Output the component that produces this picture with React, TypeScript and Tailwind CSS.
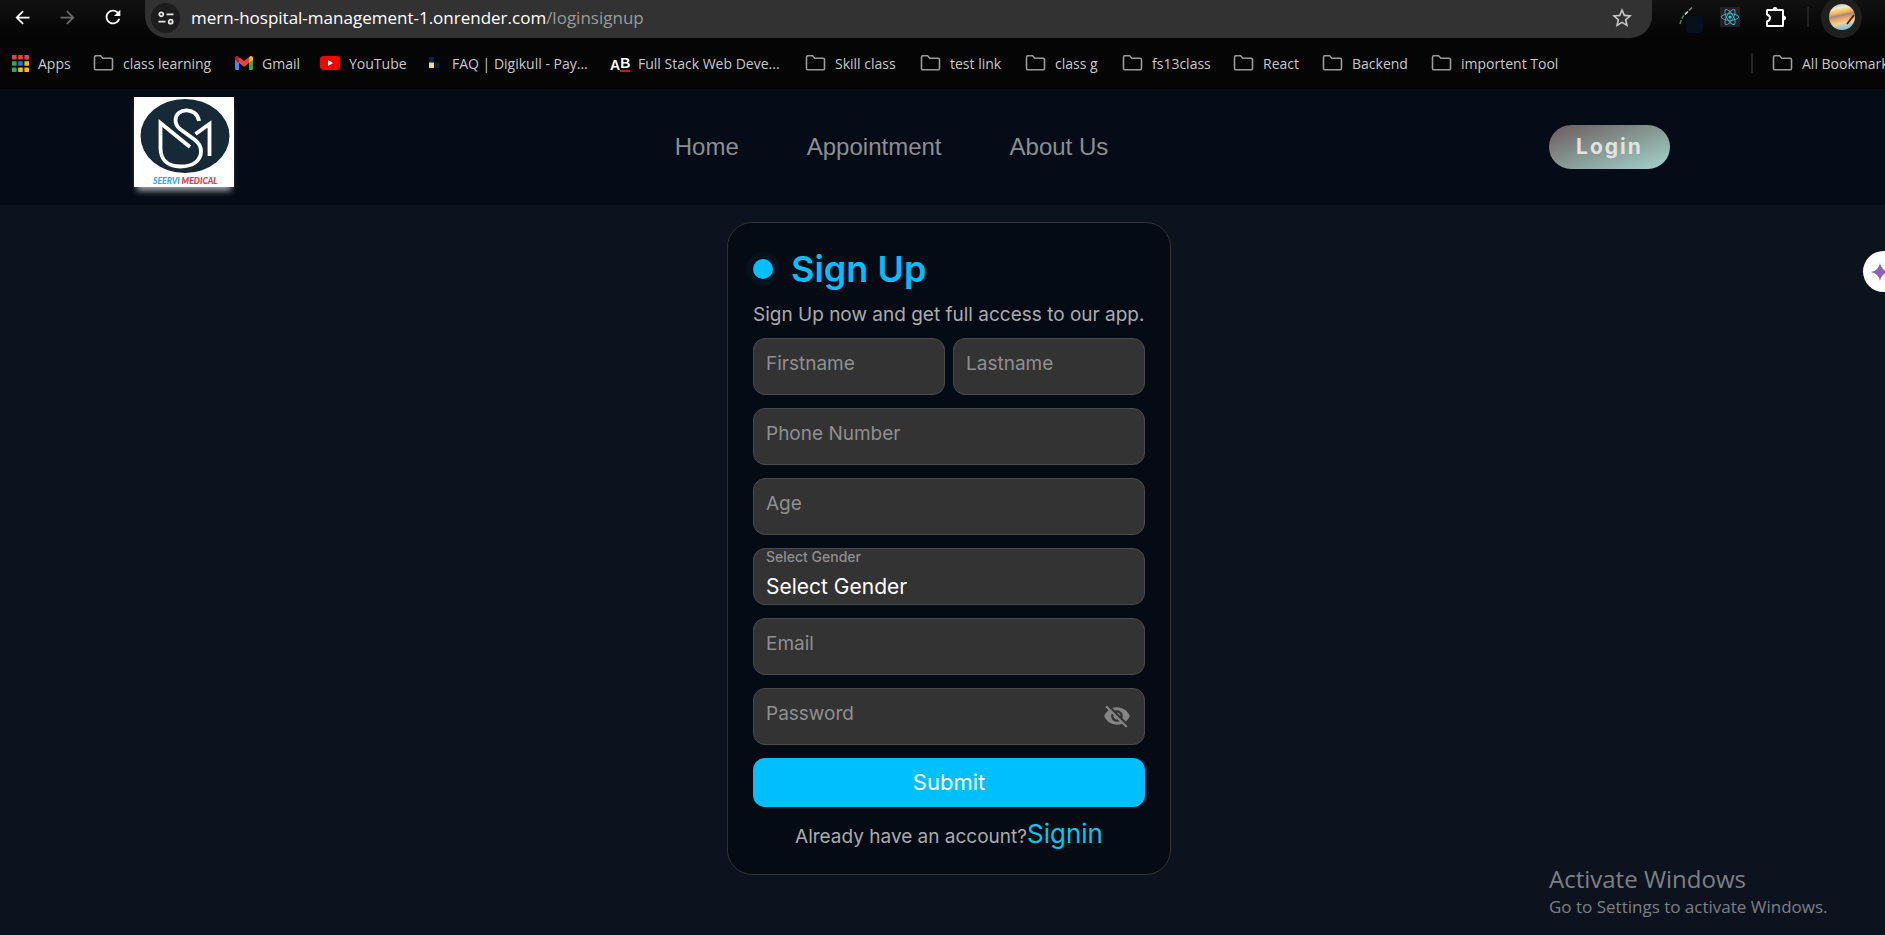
import React, { useState } from "react";
import { FaReact } from "react-icons/fa";
import { MdArrowBack, MdArrowForward, MdRefresh, MdStarBorder, MdVisibilityOff } from "react-icons/md";

const FolderIcon = () => (
  <svg viewBox="0 0 21 18" className="h-[18px] w-[21px] shrink-0" fill="none" stroke="#9a9a9a" strokeWidth="1.6">
    <path d="M1.5 3.2Q1.5 1.8 2.9 1.8H7.6L9.8 4.2H18.1Q19.5 4.2 19.5 5.6V14.4Q19.5 15.8 18.1 15.8H2.9Q1.5 15.8 1.5 14.4Z" />
  </svg>
);

const AppsIcon = () => (
  <svg viewBox="0 0 17 17" className="h-[17px] w-[17px] shrink-0">
    {["#ea4335", "#ea4335", "#ea4335", "#34a853", "#1a73e8", "#fbbc04", "#34a853", "#fbbc04", "#fbbc04"].map((c, i) => (
      <rect key={i} x={(i % 3) * 6.2} y={Math.floor(i / 3) * 6.2} width="4.6" height="4.6" rx="0.4" fill={c} />
    ))}
  </svg>
);

const GmailIcon = () => (
  <svg viewBox="0 0 18 14" className="h-[14px] w-[18px] shrink-0">
    <path d="M0 2V12.7Q0 14 1.3 14H4V5Z" fill="#4285f4" />
    <path d="M18 2V12.7Q18 14 16.7 14H14V5Z" fill="#34a853" />
    <path d="M14 1.2V7L18 4V2Q18 0 16 0Q15.2 0 14 1.2Z" fill="#fbbc04" />
    <path d="M0 2V4L4 7V1.2Q2.8 0 2 0Q0 0 0 2Z" fill="#c5221f" />
    <path d="M4 1.2V7L9 10.7L14 7V1.2L9 5Z" fill="#ea4335" />
  </svg>
);

const YouTubeIcon = () => (
  <svg viewBox="0 0 20 14" className="h-[14px] w-5 shrink-0">
    <rect width="20" height="14" rx="3.5" fill="#f00" />
    <path d="M8 4V10L13 7Z" fill="#fff" />
  </svg>
);

const DigikullIcon = () => (
  <svg viewBox="0 0 14 12" className="h-3 w-[14px] shrink-0">
    <rect width="5" height="5" fill="#0d2145" />
    <rect y="5.5" width="5" height="5.5" fill="#f7dc6a" />
    <rect x="5.5" y="5.5" width="5" height="5.5" fill="#0b1c3c" />
  </svg>
);

const AlmaIcon = () => (
  <span className="flex h-[18px] w-[19px] shrink-0 items-end font-['Liberation_Sans',sans-serif] text-[14px] font-bold text-white">
    <span className="leading-[14px]">A</span>
    <span className="border-b-2 border-[#d0142c] leading-[14px]">B</span>
  </span>
);

type Bookmark = { label: string; icon: React.ReactNode; width: string };

const bookmarks: Bookmark[] = [
  { label: "Apps", icon: <AppsIcon />, width: "w-[81px]" },
  { label: "class learning", icon: <FolderIcon />, width: "w-[142px]" },
  { label: "Gmail", icon: <GmailIcon />, width: "w-[85px]" },
  { label: "YouTube", icon: <YouTubeIcon />, width: "w-[109px]" },
  { label: "FAQ | Digikull - Pay...", icon: <DigikullIcon />, width: "w-[181px]" },
  { label: "Full Stack Web Deve...", icon: <AlmaIcon />, width: "w-[195px]" },
  { label: "Skill class", icon: <FolderIcon />, width: "w-[115px]" },
  { label: "test link", icon: <FolderIcon />, width: "w-[105px]" },
  { label: "class g", icon: <FolderIcon />, width: "w-[97px]" },
  { label: "fs13class", icon: <FolderIcon />, width: "w-[111px]" },
  { label: "React", icon: <FolderIcon />, width: "w-[89px]" },
  { label: "Backend", icon: <FolderIcon />, width: "w-[109px]" },
  { label: "importent Tool", icon: <FolderIcon />, width: "w-[140px]" },
];

const BrowserBar = () => (
  <div className="h-[89px] overflow-hidden bg-[#050505] font-['Open_Sans','Noto_Sans',sans-serif]">
    <div className="flex h-[38px] items-start bg-linear-to-b from-[#111111] to-[#050505]">
      <div className="flex h-[34px] w-[145px] shrink-0 items-center gap-6 pl-[12px]">
        <button aria-label="Back"><MdArrowBack className="size-[21px] text-white" /></button>
        <button aria-label="Forward"><MdArrowForward className="size-[21px] text-[#6b6b6b]" /></button>
        <button aria-label="Reload"><MdRefresh className="size-[22px] text-white" /></button>
      </div>
      <div className="flex h-[38px] flex-1 items-center rounded-b-[22px] bg-[#323232] pr-[18px] pb-[3px] pl-[6px]">
        <span className="flex h-[30px] w-[29px] items-center justify-center rounded-full bg-[#1d1d1d]">
          <svg viewBox="0 0 16 14" className="h-[14px] w-4" fill="none" stroke="#e6e6e6" strokeWidth="1.8">
            <circle cx="3.3" cy="3.3" r="2" />
            <path d="M8.5 3.3H15.5M0.5 10.7H7.5" />
            <circle cx="12.7" cy="10.7" r="2" />
          </svg>
        </span>
        <p className="ml-[11px] flex-1 text-[17px] leading-6 text-white">
          mern-hospital-management-1.onrender.com<span className="text-[#9b9b9b]">/loginsignup</span>
        </p>
        <button aria-label="Bookmark this page"><MdStarBorder className="size-6 text-[#c7c7c7]" /></button>
      </div>
      <div className="flex h-[34px] w-[233px] shrink-0 items-center pl-[26px]">
        <svg viewBox="0 0 26 28" className="mt-1 h-7 w-[26px]">
          <rect x="8" y="11" width="17" height="17" rx="4" fill="#06101f" />
          <path d="M2 19Q4 11 9 7" stroke="#3f8f5a" strokeWidth="1.5" fill="none" strokeDasharray="4 1.5" />
          <path d="M7 9.5L10 6.5" stroke="#d8d8d8" strokeWidth="1.5" />
          <path d="M11 5.5L14 2.5" stroke="#8a8a8a" strokeWidth="1.5" />
        </svg>
        <span className="ml-[16px] flex size-5 items-center justify-center bg-[#222222]">
          <FaReact className="size-[18px] text-[#53c1de]" />
        </span>
        <svg viewBox="0 0 22 22" className="ml-[25px] size-[22px]" fill="none" stroke="#fff" strokeWidth="2" strokeLinejoin="round">
          <path d="M2.5 4H17.5Q18 4 18 4.5V19.5Q18 20 17.5 20H2.5Q2 20 2 19.5V15.5Q5 14.5 5 12Q5 9.5 2 8.500V4.5Q2 4 2.5 4Z" />
          <path d="M7.5 4Q7.5 1 10 1Q12.5 1 12.5 4ZM18 9.500Q21 9.500 21 12Q21 14.500 18 14.500Z" fill="#fff" stroke="none" />
        </svg>
        <span className="ml-5 h-5 w-[2px] bg-[#222222]" />
        <span className="ml-[12px] flex size-[41px] shrink-0 items-center justify-center rounded-full bg-[#1f1f1f]">
          <svg viewBox="0 0 26 26" className="size-[26px]">
            <defs>
              <clipPath id="avatar"><circle cx="13" cy="13" r="13" /></clipPath>
              <linearGradient id="sunset" x1="0" y1="0" x2="0.2" y2="1">
                <stop offset="0" stopColor="#7cc0d8" />
                <stop offset="0.22" stopColor="#f8ebc0" />
                <stop offset="0.42" stopColor="#f5b04a" />
                <stop offset="0.5" stopColor="#a08a90" />
                <stop offset="0.65" stopColor="#f2a95c" />
                <stop offset="0.8" stopColor="#f0cfa0" />
                <stop offset="1" stopColor="#8cc6d6" />
              </linearGradient>
            </defs>
            <g clipPath="url(#avatar)">
              <rect width="26" height="26" fill="url(#sunset)" />
              <path d="M25 11L18 20" stroke="#3a2020" strokeWidth="1.8" />
            </g>
          </svg>
        </span>
      </div>
    </div>
    <div className="flex h-[51px] items-center overflow-hidden pb-[1px] pl-[12px] text-[14px] whitespace-nowrap text-[#c8c8c8]">
      {bookmarks.map((b) => (
        <a key={b.label} href="#" className={`flex shrink-0 items-center gap-[9px] ${b.width}`}>
          {b.icon}
          {b.label}
        </a>
      ))}
      <div className="ml-auto flex w-[134px] shrink-0 items-center">
        <span className="mr-[19px] h-5 w-[2px] shrink-0 bg-[#222222]" />
        <a href="#" className="flex items-center gap-[9px]"><FolderIcon />All Bookmarks</a>
      </div>
    </div>
  </div>
);

const Logo = () => (
  <svg viewBox="0 0 100 90" className="mb-[10px] h-[90px] w-[100px] bg-white shadow-[0_7px_6px_-3px_rgba(255,255,255,0.6)]" role="img" aria-label="Seervi Medical">
    <ellipse cx="51" cy="39" rx="44.5" ry="37" fill="#152a36" />
    <g fill="none" stroke="#fff" strokeWidth="3.8">
      <path d="M65 24C63 10 42 10 41.500 23C41.500 28 43.500 30 46 32L61 43C66 47 67 50 67 54C67 63 60 69.500 46.500 69.500C33 69.500 26.500 62 26.500 51V26L56 50" />
      <path d="M61.500 37L75.500 27V59" />
    </g>
    <text x="19" y="87" fontSize="8.600" fontWeight="900" fontStyle="italic" fontFamily="Lato, sans-serif" fill="#35a3f5">
      SEERVI <tspan fill="#fb3048">MEDICAL</tspan>
    </text>
  </svg>
);

const NavBar = () => (
  <header className="flex h-[116px] items-center justify-between bg-[#050c17] pr-[215px] pl-[134px]">
    <Logo />
    <nav className="flex gap-[68px] font-['Liberation_Sans',sans-serif] text-[24px] text-[#8b8e93]">
      <a href="#">Home</a>
      <a href="#">Appointment</a>
      <a href="#">About Us</a>
    </nav>
    <button className="h-11 w-[121px] rounded-full bg-linear-to-br from-[#695b5e] via-[#869892] to-[#a4d5d0] text-[21px] font-bold tracking-[2px] text-[#e2e2e2]">
      Login
    </button>
  </header>
);

const fieldBox = "h-[57px] w-full rounded-xl border border-[#4a4a4a] bg-[#333333] px-3 outline-none";

const Field = ({ id, label, type = "text" }: { id: string; label: string; type?: string }) => (
  <div className="relative w-full">
    <input id={id} type={type} placeholder=" " className={`${fieldBox} peer block pt-5 text-[19px] text-white`} />
    <label
      htmlFor={id}
      className="pointer-events-none absolute top-[2px] left-[13px] text-[14px] leading-4 text-[#8f8f8f] peer-placeholder-shown:top-[14px] peer-placeholder-shown:text-[19px] peer-placeholder-shown:leading-6"
    >
      {label}
    </label>
  </div>
);

const SignUpCard = () => {
  const [visible, setVisible] = useState(false);
  return (
    <form onSubmit={(e) => e.preventDefault()} className="flex w-[444px] flex-col gap-[13px] self-start rounded-[25px] border border-[#333333] bg-[#050b14] px-[25px] pt-6 pb-[23px]">
      <div>
        <h1 className="flex h-11 items-center gap-[18px] text-[36px] font-semibold text-[#00bfff]">
          <span className="size-5 rounded-full bg-[#00bfff] shadow-[0_0_0_7px_#05111b]" />
          Sign Up
        </h1>
        <p className="mt-[14px] text-[19px] leading-5 whitespace-nowrap text-[#a9abae]">Sign Up now and get full access to our app.</p>
      </div>
      <div className="flex gap-2">
        <Field id="firstname" label="Firstname" />
        <Field id="lastname" label="Lastname" />
      </div>
      <Field id="phone" label="Phone Number" />
      <Field id="age" label="Age" />
      <div className={`${fieldBox} flex flex-col`}>
        <label htmlFor="gender" className="text-[14px] leading-4 font-medium text-[#8f8f8f]">Select Gender</label>
        <select id="gender" className="mt-2 w-full appearance-none bg-transparent text-[21px] leading-7 text-white outline-none">
          <option>Select Gender</option>
          <option>Male</option>
          <option>Female</option>
        </select>
      </div>
      <Field id="email" label="Email" type="email" />
      <div className="relative">
        <Field id="password" label="Password" type={visible ? "text" : "password"} />
        <button type="button" aria-label="Toggle password visibility" onClick={() => setVisible(!visible)} className="absolute top-[14px] right-[14px]">
          <MdVisibilityOff className="size-7 text-[#858585]" />
        </button>
      </div>
      <button type="submit" className="h-[49px] rounded-xl bg-[#00bfff] text-[22px] text-white">Submit</button>
      <p className="text-center text-[19px] leading-7 whitespace-nowrap text-[#a9abae]">
        Already have an account?<a href="#" className="text-[26px] text-[#00c8f0]">Signin</a>
      </p>
    </form>
  );
};

export default function App() {
  return (
    <div className="relative flex min-h-screen flex-col overflow-hidden bg-[#0d131e] font-['Inter',sans-serif]">
      <BrowserBar />
      <NavBar />
      <main className="flex flex-1 justify-center pt-[17px] pl-[13px]">
        <SignUpCard />
      </main>
      <button aria-label="Open assistant" className="absolute top-[251px] -right-[19px] flex size-[41px] items-center rounded-full bg-white pl-2">
        <svg viewBox="0 0 18 18" className="size-[18px]">
          <path d="M9 0Q10.5 7.5 18 9Q10.5 10.5 9 18Q7.5 10.5 0 9Q7.5 7.5 9 0Z" fill="#8e63b5" />
        </svg>
      </button>
      <aside className="absolute right-[51px] bottom-4 w-[285px] font-['Open_Sans','Noto_Sans',sans-serif] text-[#7d8085]">
        <p className="text-[24px] leading-8">Activate Windows</p>
        <p className="text-[17px] leading-6 whitespace-nowrap">Go to Settings to activate Windows.</p>
      </aside>
    </div>
  );
}
